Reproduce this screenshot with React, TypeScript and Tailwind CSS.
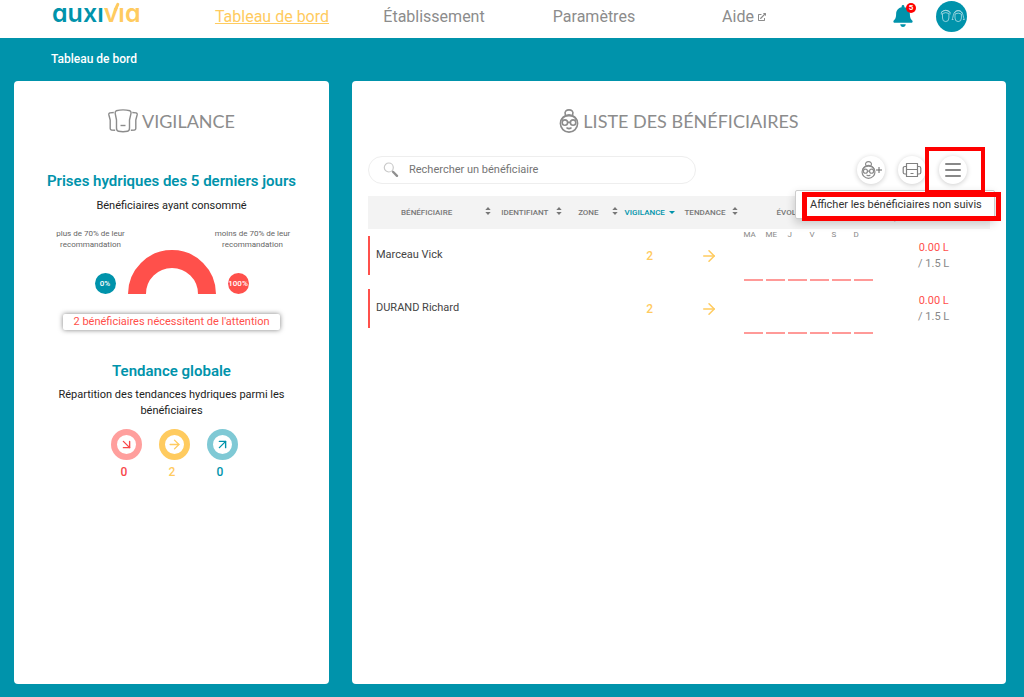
import { useState } from 'react'
import { ArrowDownRight, ArrowRight, ArrowUpRight } from 'lucide-react'
import { FaBell, FaExternalLinkAlt } from 'react-icons/fa'

interface Beneficiary {
  id: number
  name: string
  vigilance: number
  drunk: string
  target: string
}

const beneficiaries: Beneficiary[] = [
  { id: 1, name: 'Marceau Vick', vigilance: 2, drunk: '0.00 L', target: '/ 1.5 L' },
  { id: 2, name: 'DURAND Richard', vigilance: 2, drunk: '0.00 L', target: '/ 1.5 L' },
]

const days = ['MA', 'ME', 'J', 'V', 'S', 'D']

function Logo() {
  return (
    <a
      href="#"
      aria-label="auxivia"
      className="relative flex h-[26px] w-[88px] items-center font-['Inter',sans-serif] text-[25px] leading-[26px] font-semibold text-[#0093ab] [font-feature-settings:'cv11','ss03']"
    >
      auxı<span className="text-[#ffcb5f]">vıa</span>
      <svg className="absolute top-0 left-[58px] h-3 w-2.5" viewBox="0 0 10 12" fill="none">
        <path d="M5.4 9.500 L7.800 4.300" stroke="#ffcb5f" strokeWidth="3" strokeLinecap="round" />
      </svg>
    </a>
  )
}

function AvatarIcon() {
  return (
    <svg viewBox="0 0 26 16" className="h-4 w-[26px]" fill="none" stroke="#b5e0e8" strokeWidth="0.8">
      <path d="M3.5 5.5v4.5a3.2 3.6 0 0 0 6.4 0V5.500q-3.200-1.800-6.400 0z" />
      <path d="M2.400 6.500C1 1.200 12.400 1.200 11 6.500M2 4.500q4.700-4.500 9.400 0" />
      <path d="M16 6v4a3.200 3.600 0 0 0 6.400 0V6q-3.200-1.800-6.400 0z" />
      <path d="M14.500 11.500H13c1.600-2 .7-9 6.200-9s4.600 7 6.200 9h-1.500M15.500 5c1.500-3 6-3 7.500 0" />
    </svg>
  )
}

function VigilanceIcon() {
  return (
    <svg viewBox="0 0 30 24" className="h-6 w-[30px]" fill="none" stroke="#8c8c8c" strokeWidth="1.400" strokeLinejoin="round">
      <path d="M8.200 1.800Q15 0 22 1.800q1.400.8.900 3L21.500 11v8q0 3-2 3.300-4.500.8-9 0-2-.3-2-3.300v-8L7.300 4.800q-.5-2.200.9-3z" />
      <path d="M5.800 3.500 2 3.900Q.5 4.200.9 6l1.300 5v8.500q0 1.300 1.300 1.500l3.700.3M24.300 3.500l3.700.4q1.500.3 1.100 2.100l-1.300 5v8.500q0 1.300-1.300 1.500l-3.700.3" />
      <path d="M12.500 16.500h5" />
    </svg>
  )
}

function GrannyIcon({ className }: { className: string }) {
  return (
    <svg viewBox="0 0 20 24" className={className} fill="none" stroke="#8c8c8c" strokeWidth="1.600" strokeLinecap="round">
      <circle cx="10" cy="14.500" r="8.600" />
      <path d="M6.300 5.400C5.200 2.500 7.500.9 10 .9s4.800 1.600 3.700 4.500" />
      <path d="M2.800 10.500C5.500 5.500 14.500 5.500 17.200 10.500" />
      <circle cx="5.900" cy="13.600" r="2.700" />
      <circle cx="14.100" cy="13.600" r="2.700" />
      <path d="M8.700 13.400h2.600M8 19q2 1.200 4 0" />
    </svg>
  )
}

function PrinterIcon() {
  return (
    <svg viewBox="0 0 20 16" className="h-4 w-5 shrink-0" fill="none" stroke="#808080" strokeWidth="1.200" strokeLinejoin="round">
      <path d="M4.500 7.500V1.500h11v6z" />
      <path d="M4.500 4.500H3q-1.800 0-1.800 1.800v4.200q0 1.500 1.800 1.500h1.500M15.500 4.500H17q1.800 0 1.800 1.800v4.200q0 1.500-1.800 1.500h-1.500" />
      <path d="M4.500 7.500v7h11v-7M8.500 11.500h3" />
    </svg>
  )
}

function SearchIcon() {
  return (
    <svg viewBox="0 0 16 16" className="h-4 w-4 shrink-0" fill="none">
      <circle cx="5.800" cy="5.500" r="4.500" stroke="#c9c9c9" strokeWidth="1.200" />
      <path d="M9 8.800l1.400 1.400" stroke="#bbb" strokeWidth="1.400" />
      <path d="M10.200 10l3.800 3.800" stroke="#8f8f8f" strokeWidth="2.400" strokeLinecap="round" />
    </svg>
  )
}

function SortIcon() {
  return (
    <svg viewBox="0 0 6 8" className="mb-1 h-2 w-1.5 shrink-0" fill="#777">
      <path d="M3 0l2.700 3H.3zM3 8L.3 5h5.400z" />
    </svg>
  )
}

function SortableHeader({ label }: { label: string }) {
  return (
    <th scope="col" className="p-0 pr-[3px] font-medium">
      <button type="button" className="flex w-full items-center font-medium uppercase">
        <span className="flex-1 text-center">{label}</span>
        <SortIcon />
      </button>
    </th>
  )
}

function TrendRing({ kind, count }: { kind: 'down' | 'flat' | 'up'; count: number }) {
  const rings = {
    down: { ring: 'border-[#ff9f9d] text-[#f8484a]', text: 'text-[#f8484a]', Icon: ArrowDownRight },
    flat: { ring: 'border-[#ffcb5f] text-[#ffcb5f]', text: 'text-[#ffcb5f]', Icon: ArrowRight },
    up: { ring: 'border-[#7fc9d5] text-[#0093ab]', text: 'text-[#0093ab]', Icon: ArrowUpRight },
  }
  const { ring, text, Icon } = rings[kind]
  return (
    <li className="flex w-12 flex-col items-center">
      <span className={`flex h-[31px] w-[31px] items-center justify-center rounded-full border-6 ${ring}`}>
        <Icon size={15} strokeWidth={2.2} className="shrink-0" />
      </span>
      <span className={`mt-1 pr-1 text-xs font-medium ${text}`}>{count}</span>
    </li>
  )
}

function VigilanceCard() {
  return (
    <section className="flex w-[315px] shrink-0 flex-col items-center rounded bg-white pt-6 text-center">
      <h2 className="flex items-center gap-1 font-['Lato',sans-serif] text-lg leading-8 text-[#8c8c8c]">
        <VigilanceIcon />
        VIGILANCE
      </h2>

      <h3 className="mt-8 text-[15px] leading-6 font-semibold text-[#0093ab]">Prises hydriques des 5 derniers jours</h3>
      <p className="mt-[5px] text-[11px] leading-4 text-[#222]">Bénéficiaires ayant consommé</p>

      <div className="mt-3.5 flex w-[240px] justify-between text-[8px] leading-[11px] text-[#666]">
        <p className="w-[78px]">plus de 70% de leur recommandation</p>
        <p className="w-[78px]">moins de 70% de leur recommandation</p>
      </div>
      <div className="flex items-end gap-3">
        <span className="flex h-[21px] w-[21px] items-center justify-center rounded-full bg-[#0093ab] text-[8px] font-medium text-white">
          0%
        </span>
        <svg viewBox="0 0 88 44" className="h-11 w-[88px]" fill="none">
          <path d="M9 44a35 35 0 0 1 70 0" stroke="#ff504b" strokeWidth="18" />
        </svg>
        <span className="flex h-[21px] w-[21px] items-center justify-center rounded-full bg-[#ff504b] text-[8px] font-medium text-white">
          100%
        </span>
      </div>
      <button
        type="button"
        className="mt-5 w-[217px] rounded-xs bg-white text-[11px] leading-4 text-[#ff504b] shadow-[0_0_5px_rgba(0,0,0,0.5)]"
      >
        2 bénéficiaires nécessitent de l'attention
      </button>

      <h3 className="mt-[29px] text-[15px] leading-6 font-semibold text-[#0093ab]">Tendance globale</h3>
      <p className="mt-1 w-[240px] text-[11px] leading-4 text-[#222]">
        Répartition des tendances hydriques parmi les bénéficiaires
      </p>
      <ul className="mt-2.5 ml-[5px] flex">
        <TrendRing kind="down" count={0} />
        <TrendRing kind="flat" count={2} />
        <TrendRing kind="up" count={0} />
      </ul>
    </section>
  )
}

function Toolbar() {
  const [search, setSearch] = useState('')
  const [menuOpen, setMenuOpen] = useState(true)
  const round = 'flex h-7 w-7 items-center justify-center rounded-full bg-white shadow-[0_1px_5px_rgba(0,0,0,0.2)]'

  return (
    <div className="mt-[19px] flex items-center justify-between pr-[23px]">
      <label className="flex h-7 w-[328px] items-center gap-2.5 rounded-full border border-[#eee] pl-3.5">
        <SearchIcon />
        <input
          type="text"
          value={search}
          onChange={(e) => setSearch(e.target.value)}
          aria-label="Rechercher un bénéficiaire"
          placeholder="Rechercher un bénéficiaire"
          className="min-w-0 flex-1 text-[11px] text-[#666] outline-none placeholder:text-[#757575]"
        />
      </label>

      <div className="flex gap-[13px]">
        <button type="button" aria-label="Ajouter un bénéficiaire" className={round}>
          <GrannyIcon className="h-[18px] w-[15px] shrink-0" />
          <svg viewBox="0 0 6 6" className="h-1.5 w-1.5 shrink-0" stroke="#666">
            <path d="M3 0v6M0 3h6" />
          </svg>
        </button>
        <button type="button" aria-label="Imprimer" className={round}>
          <PrinterIcon />
        </button>
        <div className="relative">
          <button type="button" aria-label="Menu" className={round} onClick={() => setMenuOpen(!menuOpen)}>
            <svg viewBox="0 0 18 16" className="h-4 w-[18px]" stroke="#888" strokeWidth="2" strokeLinecap="round">
              <path d="M2 2h14M2 8h14M2 14h14" />
            </svg>
          </button>
          {menuOpen && (
            <div className="absolute top-[34px] -right-7 z-10 h-[29px] w-[200px] rounded-xs border border-[#ccc] bg-white pl-3.5 shadow-[0_4px_10px_rgba(0,0,0,0.2)]">
              <button type="button" className="text-[11px] leading-7 whitespace-nowrap text-[#333]">
                Afficher les bénéficiaires non suivis
              </button>
            </div>
          )}
          {/* highlight frames */}
          <div className="pointer-events-none absolute -top-[9px] -left-3.5 z-20 h-[47px] w-[60px] border-4 border-[#f00]" />
          <div className="pointer-events-none absolute top-9 -right-[34px] z-20 h-[29px] w-[199px] border-5 border-[#f00]" />
        </div>
      </div>
    </div>
  )
}

function BeneficiaryTable() {
  return (
    <table className="mt-3 w-full table-fixed border-collapse">
      <colgroup>
        <col className="w-[20.3%]" />
        <col className="w-[11.3%]" />
        <col className="w-[9.1%]" />
        <col className="w-[9.2%]" />
        <col className="w-[10%]" />
        <col className="w-[22%]" />
        <col />
      </colgroup>
      <thead>
        <tr className="h-[33px] bg-[#f3f3f3] text-[8px] leading-3 text-[#777] uppercase">
          <SortableHeader label="Bénéficiaire" />
          <SortableHeader label="Identifiant" />
          <SortableHeader label="Zone" />
          <th scope="col" className="p-0 font-medium">
            <button type="button" className="flex w-full items-center justify-center gap-1 font-medium text-[#0093ab] uppercase">
              Vigilance
              <svg viewBox="0 0 6 3" className="h-[3px] w-1.5" fill="#0093ab">
                <path d="M0 0h6L3 3z" />
              </svg>
            </button>
          </th>
          <SortableHeader label="Tendance" />
          <th scope="col" className="p-0 pl-9 text-left font-medium">Évolution</th>
          <th scope="col" className="p-0 pb-1 text-center align-bottom font-medium">/ Recommandation</th>
        </tr>
      </thead>
      <tbody>
        {beneficiaries.map((b, row) => (
          <tr key={b.id} className="text-[11px]">
            <td className="p-0">
              <div className="flex h-[39px] items-center border-l-2 border-[#ff504b] pl-1.5 text-[#444]">{b.name}</div>
            </td>
            <td />
            <td />
            <td className="p-0 text-center text-xs font-medium text-[#ffcb5f]">{b.vigilance}</td>
            <td className="p-0">
              <ArrowRight size={18} strokeWidth={2} className="mx-auto text-[#ffcb5f]" />
            </td>
            <td className="p-0">
              <div className="flex h-[53px] flex-col justify-between pb-px pl-[3px]">
                <div className="flex gap-[3px] text-[8px] leading-3 text-[#888]">
                  {row === 0 && days.map((day) => <span key={day} className="w-[19px]">{day}</span>)}
                </div>
                <div className="flex gap-[3px]">
                  {days.map((day) => (
                    <span key={day} className="h-0.5 w-[19px] bg-[#ff9a98]" />
                  ))}
                </div>
              </div>
            </td>
            <td className="p-0 text-center leading-4">
              <div className="text-[#ff504b]">{b.drunk}</div>
              <div className="text-[#888]">{b.target}</div>
            </td>
          </tr>
        ))}
      </tbody>
    </table>
  )
}

export default function App() {
  return (
    <div className="flex min-h-screen flex-col bg-[#0093ab] font-['Roboto',sans-serif]">
      <header className="flex h-[38px] items-start bg-white pr-[57px] pl-[52px]">
        <Logo />
        <nav className="ml-[51px] grid h-[34px] w-[624px] grid-cols-[162fr_162fr_158fr_142fr] items-center text-center text-base text-[#8c8c8c]">
          <a href="#" className="text-[#ffcb5f] underline">Tableau de bord</a>
          <a href="#">Établissement</a>
          <a href="#">Paramètres</a>
          <a href="#" className="flex items-center justify-center gap-1">
            Aide
            <FaExternalLinkAlt size={8} />
          </a>
        </nav>
        <div className="ml-auto flex h-8 items-center gap-[22px]">
          <button type="button" aria-label="Notifications" className="relative text-[#0093ab]">
            <FaBell size={22} />
            <span className="absolute -top-0.5 -right-0.5 flex h-2.5 w-2.5 items-center justify-center rounded-full bg-[#f00] text-[8px] font-bold text-white">
              5
            </span>
          </button>
          <button type="button" aria-label="Compte" className="flex h-[31px] w-[31px] items-center justify-center rounded-full bg-[#0093ab]">
            <AvatarIcon />
          </button>
        </div>
      </header>

      <h1 className="pt-[11px] pb-3 pl-[51px] text-xs leading-5 font-medium text-white">Tableau de bord</h1>

      <main className="flex flex-1 gap-[23px] pr-[18px] pb-[13px] pl-3.5">
        <VigilanceCard />
        <section className="min-w-0 flex-1 rounded bg-white px-4 pt-6">
          <h2 className="flex items-center justify-center gap-1 font-['Lato',sans-serif] text-lg leading-8 text-[#8c8c8c]">
            <GrannyIcon className="h-6 w-5" />
            LISTE DES BÉNÉFICIAIRES
          </h2>
          <Toolbar />
          <BeneficiaryTable />
        </section>
      </main>
    </div>
  )
}
